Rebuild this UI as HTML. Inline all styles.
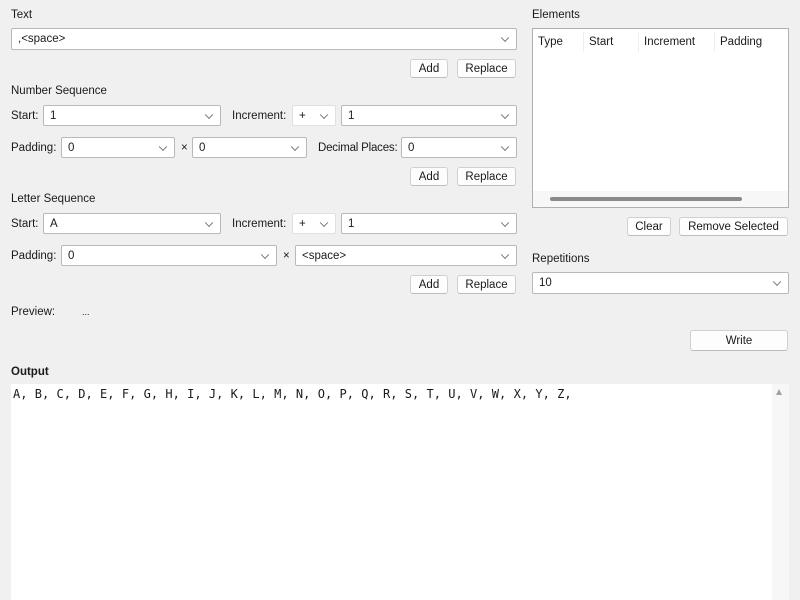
<!DOCTYPE html>
<html><head><style>
*{box-sizing:border-box;margin:0;padding:0}
body{width:800px;height:600px;background:#f0f0f0;font-family:"Liberation Sans",sans-serif;font-size:11.5px;color:#1a1a1a;position:relative;overflow:hidden}
.a{position:absolute;white-space:nowrap}
.l{position:absolute;line-height:14px;white-space:nowrap}
.c{position:absolute;background:#fff;border:1px solid #b9b9b9;border-radius:2px;padding-left:6px;display:flex;align-items:center}
.c::after{content:"";position:absolute;right:8px;top:50%;width:5px;height:5px;border-right:1px solid #777;border-bottom:1px solid #777;transform:translateY(-70%) rotate(45deg)}
.b{position:absolute;background:#fdfdfd;border:1px solid #d0d0d0;border-bottom-color:#bdbdbd;border-radius:3px;display:flex;align-items:center;justify-content:center}
</style></head><body>
<div class="l" style="left:11px;top:8px">Text</div>
<div class="c" style="left:11px;top:28px;width:506px;height:22px">,&lt;space&gt;</div>
<div class="b" style="left:410px;top:59px;width:38px;height:19px">Add</div>
<div class="b" style="left:457px;top:59px;width:59px;height:19px">Replace</div>

<div class="l" style="left:11px;top:84px">Number Sequence</div>
<div class="l" style="left:11px;top:109px">Start:</div>
<div class="c" style="left:43px;top:105px;width:178px;height:21px">1</div>
<div class="l" style="left:232px;top:109px">Increment:</div>
<div class="c" style="left:292px;top:105px;width:44px;height:21px;border-color:#e0e0e0">+</div>
<div class="c" style="left:341px;top:105px;width:176px;height:21px">1</div>
<div class="l" style="left:11px;top:141px">Padding:</div>
<div class="c" style="left:61px;top:137px;width:114px;height:21px">0</div>
<div class="l" style="left:181px;top:141px">×</div>
<div class="c" style="left:192px;top:137px;width:115px;height:21px">0</div>
<div class="l" style="left:318px;top:141px;letter-spacing:-0.2px">Decimal Places:</div>
<div class="c" style="left:401px;top:137px;width:116px;height:21px">0</div>
<div class="b" style="left:410px;top:167px;width:38px;height:19px">Add</div>
<div class="b" style="left:457px;top:167px;width:59px;height:19px">Replace</div>

<div class="l" style="left:11px;top:192px">Letter Sequence</div>
<div class="l" style="left:11px;top:217px">Start:</div>
<div class="c" style="left:43px;top:213px;width:178px;height:21px">A</div>
<div class="l" style="left:232px;top:217px">Increment:</div>
<div class="c" style="left:292px;top:213px;width:44px;height:21px;border-color:#e0e0e0">+</div>
<div class="c" style="left:341px;top:213px;width:176px;height:21px">1</div>
<div class="l" style="left:11px;top:249px">Padding:</div>
<div class="c" style="left:61px;top:245px;width:216px;height:21px">0</div>
<div class="l" style="left:283px;top:249px">×</div>
<div class="c" style="left:295px;top:245px;width:222px;height:21px">&lt;space&gt;</div>
<div class="b" style="left:410px;top:275px;width:38px;height:19px">Add</div>
<div class="b" style="left:457px;top:275px;width:59px;height:19px">Replace</div>

<div class="l" style="left:11px;top:305px">Preview:</div>
<div class="l" style="left:82px;top:305px;font-size:9px">...</div>

<div class="l" style="left:532px;top:8px">Elements</div>
<div class="a" style="left:532px;top:28px;width:257px;height:180px;background:#fff;border:1px solid #b0b0b0">
<div class="l" style="left:5px;top:6px">Type</div>
<div class="l" style="left:56px;top:6px">Start</div>
<div class="l" style="left:111px;top:6px">Increment</div>
<div class="l" style="left:187px;top:6px">Padding</div>
<div class="a" style="left:50px;top:3px;width:1px;height:20px;background:#eee"></div>
<div class="a" style="left:105px;top:3px;width:1px;height:20px;background:#eee"></div>
<div class="a" style="left:181px;top:3px;width:1px;height:20px;background:#eee"></div>
<div class="a" style="left:0;top:162px;width:255px;height:16px;background:#f7f7f7"></div>
<div class="a" style="left:17px;top:168px;width:192px;height:4px;background:#8a8a8a;border-radius:2px"></div>
</div>
<div class="b" style="left:627px;top:217px;width:44px;height:19px">Clear</div>
<div class="b" style="left:679px;top:217px;width:109px;height:19px">Remove Selected</div>
<div class="l" style="left:532px;top:252px">Repetitions</div>
<div class="c" style="left:532px;top:272px;width:257px;height:22px">10</div>
<div class="b" style="left:690px;top:330px;width:98px;height:21px">Write</div>

<div class="l" style="left:11px;top:365px;font-weight:bold">Output</div>
<div class="a" style="left:11px;top:384px;width:761px;height:216px;background:#fff"></div>
<div class="a" style="left:772px;top:384px;width:17px;height:216px;background:#f7f7f7"></div>
<div class="a" style="left:776px;top:389px;width:0;height:0;border-left:3.5px solid transparent;border-right:3.5px solid transparent;border-bottom:6px solid #a0a0a0"></div>
<div class="a" style="left:13px;top:387px;font-family:'DejaVu Sans Mono',monospace;font-size:12px;line-height:14px;letter-spacing:0.03px">A, B, C, D, E, F, G, H, I, J, K, L, M, N, O, P, Q, R, S, T, U, V, W, X, Y, Z,</div>
</body></html>
